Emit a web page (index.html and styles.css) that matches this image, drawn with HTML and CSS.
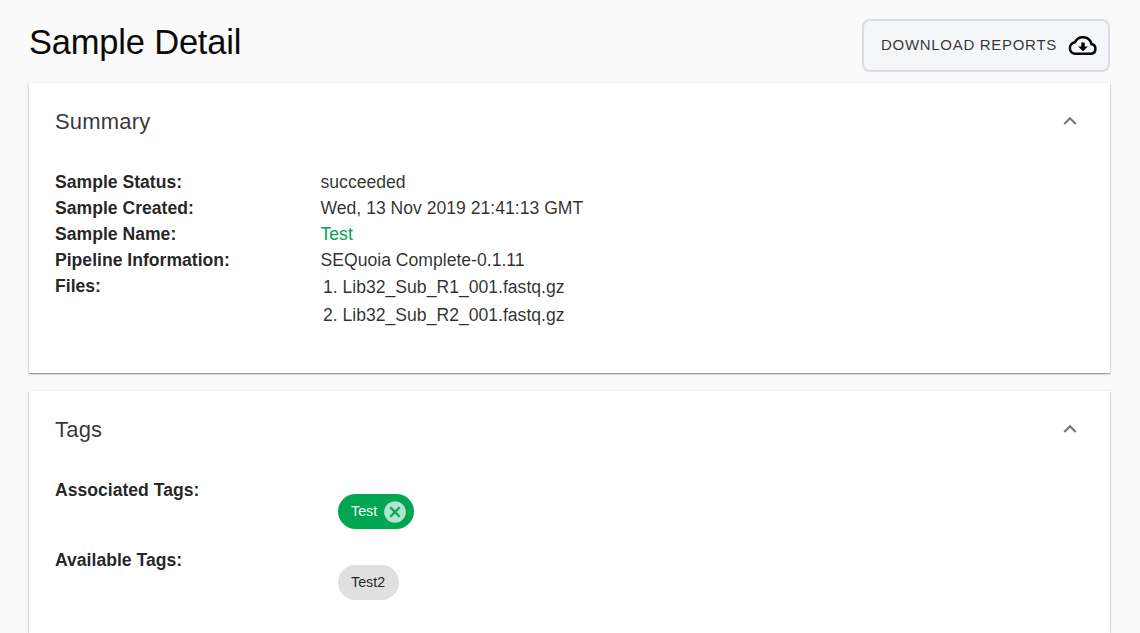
FILE: index.html
```html
<!DOCTYPE html>
<html lang="en">
<head>
<meta charset="utf-8">
<title>Sample Detail</title>
<link rel="stylesheet" href="styles.css">
</head>
<body>
<header class="page-header">
  <h1>Sample Detail</h1>
  <button class="download"><span>DOWNLOAD REPORTS</span>
    <svg class="cloud" viewBox="0 0 30 30"><path d="M6.900 22.800h16a4.900 4.900 0 0 0 .5-9.700A8.700 8.700 0 0 0 7 11.200a5.850 5.850 0 0 0-.1 11.600Z" fill="none" stroke="#000" stroke-width="2.500"/><path d="M13.300 11.500h3.400v4h3.100L15 20.200l-4.800-4.700h3.100z"/></svg>
  </button>
</header>
<main>
  <section class="card summary">
    <div class="card-head"><h2>Summary</h2><svg class="chevron" viewBox="0 0 24 24"><path d="M12 8l-6 6 1.41 1.41L12 10.830l4.590 4.580L18 14z"/></svg></div>
    <dl class="details">
      <dt>Sample Status:</dt><dd>succeeded</dd>
      <dt>Sample Created:</dt><dd>Wed, 13 Nov 2019 21:41:13 GMT</dd>
      <dt>Sample Name:</dt><dd><a class="name">Test</a></dd>
      <dt>Pipeline Information:</dt><dd>SEQuoia Complete-0.1.11</dd>
      <dt>Files:</dt><dd><ol class="files"><li>Lib32_Sub_R1_001.fastq.gz</li><li>Lib32_Sub_R2_001.fastq.gz</li></ol></dd>
    </dl>
  </section>
  <section class="card tags">
    <div class="card-head"><h2>Tags</h2><svg class="chevron" viewBox="0 0 24 24"><path d="M12 8l-6 6 1.41 1.41L12 10.830l4.590 4.580L18 14z"/></svg></div>
    <div class="tag-row"><h3>Associated Tags:</h3><span class="chip active"><span>Test</span><svg viewBox="0 0 24 24"><path d="M12 2C6.470 2 2 6.470 2 12s4.470 10 10 10 10-4.470 10-10S17.530 2 12 2zm5 13.590L15.590 17 12 13.410 8.410 17 7 15.590 10.590 12 7 8.410 8.410 7 12 10.590 15.590 7 17 8.410 13.410 12 17 15.590z"/></svg></span></div>
    <div class="tag-row"><h3>Available Tags:</h3><span class="chip available"><span>Test2</span></span></div>
  </section>
</main>
</body>
</html>
```

FILE: styles.css
```css
* { box-sizing: border-box; }
body { margin: 0; height: 633px; overflow: hidden; background: #fafafa; color: rgba(0,0,0,.87); font-family: "Liberation Sans", Arial, sans-serif; }
h1, h2, h3, dl, dd, ol { margin: 0; padding: 0; }
.page-header { height: 83px; padding: 19px 30px 0 29px; display: flex; justify-content: space-between; align-items: flex-start; }
h1 { font-size: 34.500px; font-weight: 400; line-height: 46px; color: #0a0a0a; letter-spacing: -.2px; }
.download { width: 248px; height: 53px; padding: 0 10px 0 17px; display: flex; align-items: center; justify-content: space-between; border: 2px solid #d9dce6; border-radius: 8px; background: #f5f6f8; color: rgba(0,0,0,.8); font: 15px/20px "Liberation Sans", Arial, sans-serif; letter-spacing: .7px; white-space: nowrap; }
.download span { padding-bottom: 2px; }
.cloud { width: 30px; height: 30px; flex: none; }
.card { margin: 0 30px 0 29px; padding: 0 26px; background: #fff; box-shadow: 0 1px 1px rgba(0,0,0,.28), 0 1px 3px rgba(0,0,0,.2); }
.summary { height: 290px; margin-bottom: 18px; }
.tags { height: 242px; }
.card-head { height: 86px; padding-top: 25px; display: flex; justify-content: space-between; align-items: flex-start; }
h2 { font-size: 22px; line-height: 28px; font-weight: 400; letter-spacing: .2px; color: rgba(0,0,0,.8); }
.chevron { width: 26px; height: 26px; margin: 0 1px 0 0; fill: rgba(0,0,0,.54); }
.details { display: grid; grid-template-columns: 265.500px 1fr; grid-auto-rows: 26px; font-size: 17.600px; line-height: 26px; }
dd { color: rgba(0,0,0,.82); }
dt, h3 { font-size: 17.600px; font-weight: 700; line-height: 26px; }
.name { color: #00a651; }
.files { padding-left: 22px; }
.files li { line-height: 28px; }
.tag-row { height: 70px; display: grid; grid-template-columns: 283px max-content; align-items: start; }
.chip { height: 35px; margin-top: 17px; padding: 0 13px; display: flex; align-items: center; border-radius: 18px; background: #e0e0e0; font-size: 14.300px; }
.chip span { padding-bottom: 2px; }
.available { width: 61px; margin-top: 18px; }
.active { width: 76px; background: #00a651; color: #fff; padding-right: 6px; justify-content: space-between; }
.chip svg { width: 26px; height: 26px; flex: none; fill: rgba(255,255,255,.7); }
```
